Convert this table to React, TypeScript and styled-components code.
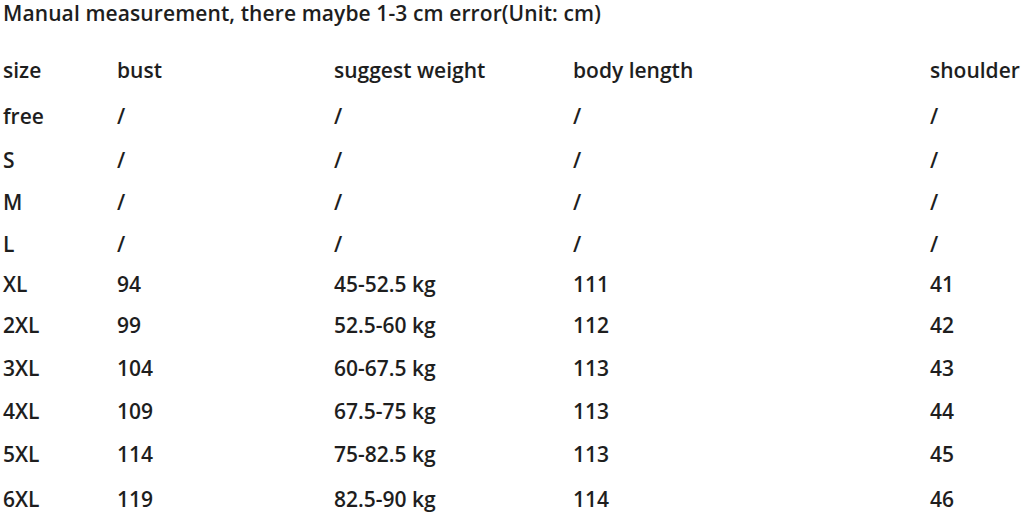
import React from 'react';
import styled, { createGlobalStyle } from 'styled-components';

const GlobalStyle = createGlobalStyle`
  html, body {
    margin: 0;
    padding: 0;
    background: #fff;
  }
  body {
    font-family: 'Open Sans', 'Liberation Sans', sans-serif;
    color: #1e1e1e;
  }
`;

const Page = styled.div`
  width: 1024px;
  height: 514px;
  overflow: hidden;
  padding-left: 3px;
  box-sizing: border-box;
`;

const Title = styled.div`
  font-size: 21px;
  font-weight: 600;
  line-height: 27px;
  height: 47px;
  white-space: nowrap;
  letter-spacing: 0.1px;
`;

const Table = styled.div`
  display: grid;
  grid-template-columns: 114px 217px 239px 357px 1fr;
  grid-template-rows: 46px 45px 43px 42px 41px 40px 42px 43px 43px 44px 45px;
  font-size: 21px;
  font-weight: 600;
`;

const Cell = styled.div`
  display: flex;
  align-items: center;
  white-space: nowrap;
`;

const headers = ['size', 'bust', 'suggest weight', 'body length', 'shoulder'];

const rows: string[][] = [
  ['free', '/', '/', '/', '/'],
  ['S', '/', '/', '/', '/'],
  ['M', '/', '/', '/', '/'],
  ['L', '/', '/', '/', '/'],
  ['XL', '94', '45-52.5 kg', '111', '41'],
  ['2XL', '99', '52.5-60 kg', '112', '42'],
  ['3XL', '104', '60-67.5 kg', '113', '43'],
  ['4XL', '109', '67.5-75 kg', '113', '44'],
  ['5XL', '114', '75-82.5 kg', '113', '45'],
  ['6XL', '119', '82.5-90 kg', '114', '46'],
];

export default function App() {
  return (
    <Page>
      <GlobalStyle />
      <Title>Manual measurement, there maybe 1-3 cm error(Unit: cm)</Title>
      <Table>
        {headers.map((h) => (
          <Cell key={h}>{h}</Cell>
        ))}
        {rows.map((r) =>
          r.map((v, i) => <Cell key={r[0] + i}>{v}</Cell>)
        )}
      </Table>
    </Page>
  );
}
